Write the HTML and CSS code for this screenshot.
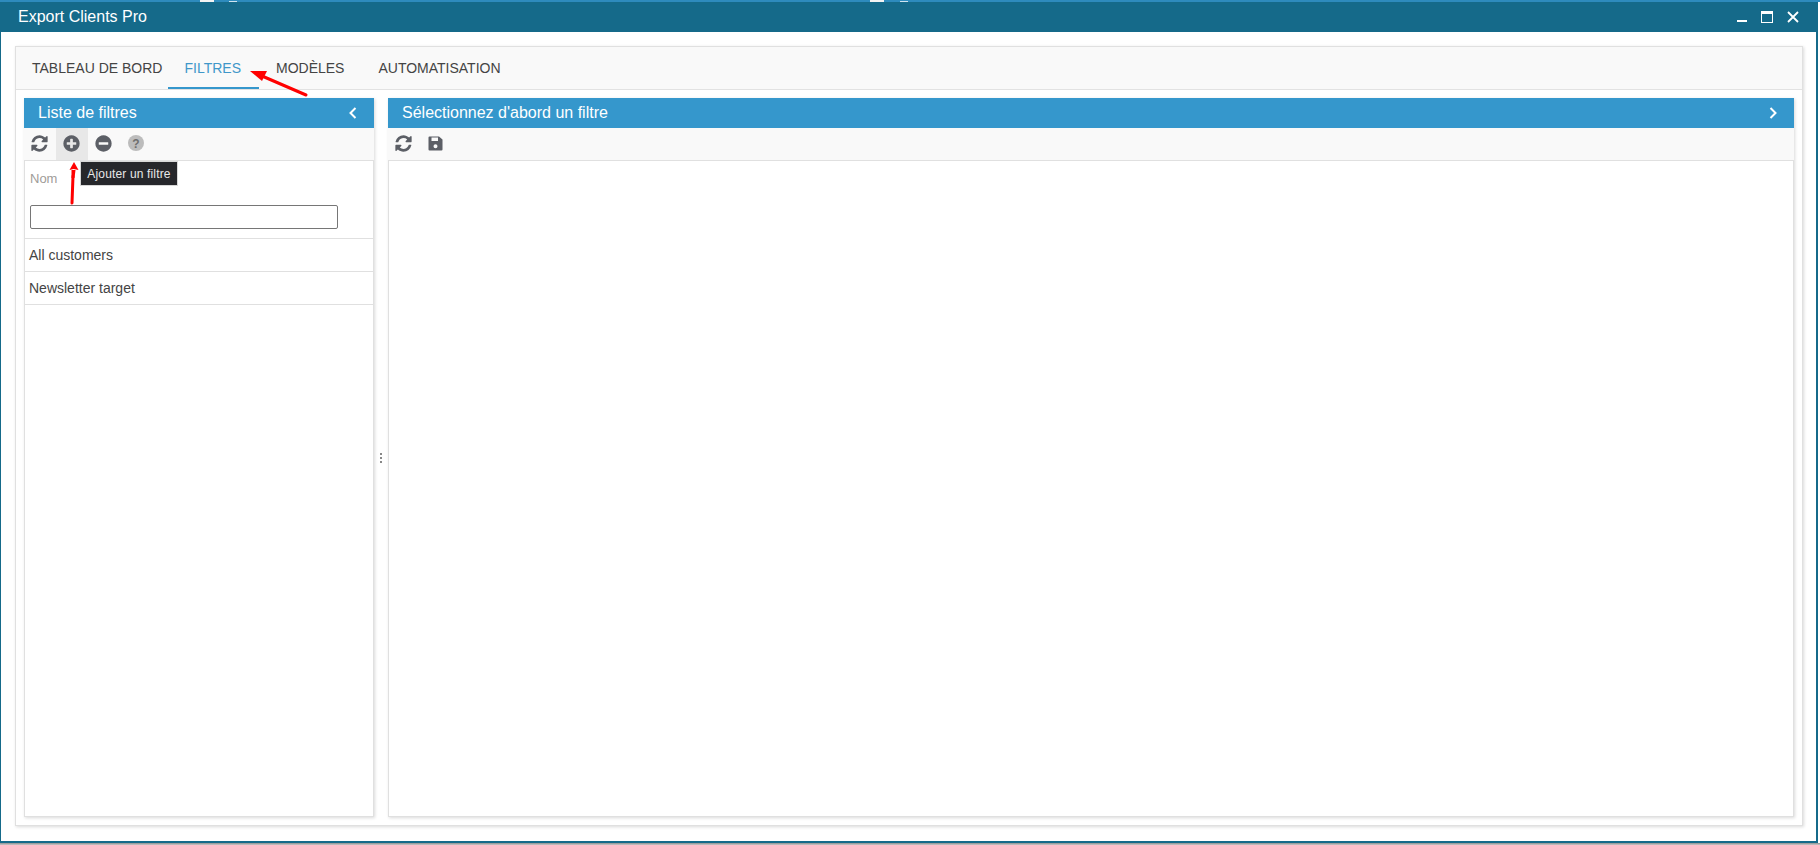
FILE: index.html
```html
<!DOCTYPE html>
<html lang="fr">
<head>
<meta charset="utf-8">
<title>Export Clients Pro</title>
<link rel="stylesheet" href="styles.css">
</head>
<body>
<div class="backdrop"><i class="frag f1"></i><i class="frag f2"></i><i class="frag f3"></i><i class="frag f4"></i></div>
<div class="window">
  <header class="titlebar">
    <span class="title">Export Clients Pro</span>
    <div class="winctrls">
      <svg class="winicon" width="12" height="14" viewBox="0 0 12 14"><rect x="1" y="10" width="10" height="2" fill="#fff"/></svg>
      <svg class="winicon" width="14" height="14" viewBox="0 0 14 14"><rect x="1.500" y="1.500" width="11" height="11" fill="none" stroke="#fff"/><rect x="1" y="1" width="12" height="3" fill="#fff"/></svg>
      <svg class="winicon" width="14" height="14" viewBox="0 0 14 14"><path d="M2 2l10 10M12 2L2 12" stroke="#fff" stroke-width="1.800" fill="none"/></svg>
    </div>
  </header>
  <main class="content">
    <div class="card">
      <nav class="tabs">
        <a class="tab">TABLEAU DE BORD</a>
        <a class="tab active">FILTRES</a>
        <a class="tab">MODÈLES</a>
        <a class="tab">AUTOMATISATION</a>
      </nav>
      <div class="split">
        <section class="panel left">
          <div class="panel-head"><span>Liste de filtres</span>
            <svg width="10" height="14" viewBox="0 0 10 14"><path d="M7.500 2L2.500 7l5 5" fill="none" stroke="#fff" stroke-width="2"/></svg>
          </div>
          <div class="toolbar">
            <button class="tool"><svg class="ico" viewBox="0 0 1792 1792"><path d="M1639 1056q0 5-1 7-64 268-268 434.500t-478 166.500q-146 0-282.500-55t-243.500-157l-129 129q-19 19-45 19t-45-19-19-45v-448q0-26 19-45t45-19h448q26 0 45 19t19 45-19 45l-137 137q71 66 161 102t187 36q134 0 250-65t186-179q11-17 53-117 8-23 30-23h192q13 0 22.500 9.500t9.500 22.500zm25-800v448q0 26-19 45t-45 19h-448q-26 0-45-19t-19-45 19-45l138-138q-148-137-349-137-134 0-250 65t-186 179q-11 17-53 117-8 23-30 23h-199q-13 0-22.500-9.500t-9.500-22.500v-7q65-268 270-434.500t480-166.500q146 0 284 55.500t245 156.500l130-129q19-19 45-19t45 19 19 45z"/></svg></button>
            <button class="tool hover"><svg class="ico" viewBox="0 0 1792 1792"><path d="M1344 960v-128q0-26-19-45t-45-19h-256v-256q0-26-19-45t-45-19h-128q-26 0-45 19t-19 45v256h-256q-26 0-45 19t-19 45v128q0 26 19 45t45 19h256v256q0 26 19 45t45 19h128q26 0 45-19t19-45v-256h256q26 0 45-19t19-45zm320-64q0 209-103 385.500t-279.500 279.500-385.500 103-385.500-103-279.500-279.500-103-385.500 103-385.500 279.500-279.500 385.500-103 385.500 103 279.500 279.500 103 385.500z"/></svg></button>
            <button class="tool"><svg class="ico" viewBox="0 0 1792 1792"><path d="M1344 960v-128q0-26-19-45t-45-19h-768q-26 0-45 19t-19 45v128q0 26 19 45t45 19h768q26 0 45-19t19-45zm320-64q0 209-103 385.500t-279.500 279.500-385.500 103-385.500-103-279.500-279.500-103-385.500 103-385.500 279.500-279.500 385.500-103 385.500 103 279.500 279.500 103 385.500z"/></svg></button>
            <button class="tool"><svg class="help" width="16" height="16" viewBox="0 0 16 16"><circle cx="8" cy="8" r="8" fill="#bcbcbc"/><text x="8" y="12.500" text-anchor="middle" class="help-mark">?</text></svg></button>
          </div>
          <div class="panel-body">
            <div class="filter">
              <label class="filter-label" for="nom">Nom</label>
              <input class="filter-input" id="nom" type="text">
            </div>
            <div class="row">All customers</div>
            <div class="row">Newsletter target</div>
          </div>
        </section>
        <div class="splitter"><i></i><i></i><i></i></div>
        <section class="panel right">
          <div class="panel-head"><span>Sélectionnez d'abord un filtre</span>
            <svg width="10" height="14" viewBox="0 0 10 14"><path d="M2.500 2l5 5-5 5" fill="none" stroke="#fff" stroke-width="2"/></svg>
          </div>
          <div class="toolbar">
            <button class="tool"><svg class="ico" viewBox="0 0 1792 1792"><path d="M1639 1056q0 5-1 7-64 268-268 434.500t-478 166.500q-146 0-282.500-55t-243.500-157l-129 129q-19 19-45 19t-45-19-19-45v-448q0-26 19-45t45-19h448q26 0 45 19t19 45-19 45l-137 137q71 66 161 102t187 36q134 0 250-65t186-179q11-17 53-117 8-23 30-23h192q13 0 22.500 9.500t9.500 22.500zm25-800v448q0 26-19 45t-45 19h-448q-26 0-45-19t-19-45 19-45l138-138q-148-137-349-137-134 0-250 65t-186 179q-11 17-53 117-8 23-30 23h-199q-13 0-22.500-9.500t-9.500-22.500v-7q65-268 270-434.500t480-166.500q146 0 284 55.500t245 156.500l130-129q19-19 45-19t45 19 19 45z"/></svg></button>
            <button class="tool"><svg class="save" width="15" height="15" viewBox="0 0 15 15"><path fill-rule="evenodd" d="M1.500 0.500h9.500l3.500 3v10a1 1 0 0 1-1 1h-12a1 1 0 0 1-1-1v-12a1 1 0 0 1 1-1zm2 1v3.500h6.500V1.500zM7.500 8.200a2 2 0 1 0 0 4a2 2 0 0 0 0-4z"/></svg></button>
          </div>
          <div class="panel-body"></div>
        </section>
      </div>
    </div>
  </main>
</div>
<div class="tooltip">Ajouter un filtre</div>
<svg class="annotations" width="1820" height="845" viewBox="0 0 1820 845">
  <path d="M306 95L262 76" stroke="#f00" stroke-width="3" fill="none" stroke-linecap="round"/>
  <path d="M250 71L267 71L262 81Z" fill="#f00"/>
  <path d="M72 203L73 176" stroke="#f00" stroke-width="3" fill="none" stroke-linecap="round"/>
  <path d="M74 162L78.500 170L73.500 169L69.500 170Z" fill="#f00"/>
  <path d="M71.500 170H75.500L74.500 178H71.500Z" fill="#f00"/>
</svg>
</body>
</html>
```
FILE: styles.css
```css
* { box-sizing: border-box; }
html, body { margin: 0; height: 845px; overflow: hidden; }
body {
  position: relative;
  background: linear-gradient(#8f8f8f, #c9c9c9) 0 843px / 100% 2px no-repeat;
  font-family: "Liberation Sans", Arial, sans-serif;
  color: #3c3c3c;
  padding-top: 2px;
}
.backdrop { position: absolute; left: 0; right: 0; top: 0; height: 2px; background: #2e8bbd; }
.frag { position: absolute; top: 0; height: 2px; background: #f3f3f3; display: block; }
.f1 { left: 200px; width: 14px; }
.f2 { left: 229px; width: 8px; top: 1px; height: 1px; background: #cfe4f0; }
.f3 { left: 870px; width: 14px; }
.f4 { left: 900px; width: 8px; top: 1px; height: 1px; background: #cfe4f0; }
.window {
  width: 1818px;
  height: 841px;
  display: flex;
  flex-direction: column;
  background: #fff;
  border: solid #156a8a;
  border-width: 0 2px 2px 1px;
}
.titlebar {
  flex: 0 0 30px;
  display: flex;
  align-items: center;
  justify-content: space-between;
  background: #156a8a;
  color: #fff;
  padding: 0 16px 0 17px;
}
.title { font-size: 16px; }
.winctrls { display: flex; gap: 12px; align-items: center; }
.winicon { display: block; }
.content { flex: 1; min-height: 0; padding: 14px 13px 15px 14px; }
.card {
  height: 100%;
  display: flex;
  flex-direction: column;
  background: #fff;
  border: 1px solid #e0e0e0;
  box-shadow: 1px 1px 3px rgba(0,0,0,.15);
}
.tabs {
  flex: 0 0 43px;
  display: flex;
  background: #f9f9f9;
  border-bottom: 1px solid #e2e2e2;
}
.tab {
  display: flex;
  align-items: center;
  padding: 0 17px;
  height: 42px;
  font-size: 14px;
  color: #444;
}
.tab:first-child { padding-left: 16px; padding-right: 6px; }
.tab.active { color: #3f97c9; border-bottom: 2px solid #3597cc; padding: 2px 18px 0 16px; }
.split { flex: 1; min-height: 0; display: flex; padding: 8px 8px 8px 8px; }
.panel {
  display: flex;
  flex-direction: column;
  box-shadow: 1px 1px 3px rgba(0,0,0,.15);
}
.panel.left { flex: 0 0 350px; }
.panel.right { flex: 1; min-width: 0; }
.panel-head {
  flex: 0 0 30px;
  display: flex;
  align-items: center;
  justify-content: space-between;
  background: #3597cc;
  color: #fff;
  font-size: 16px;
  padding: 0 16px 0 14px;
}
.toolbar {
  flex: 0 0 32px;
  display: flex;
  background: #f9f9f9;
}
.tool {
  width: 32px;
  height: 32px;
  border: 0;
  padding: 0 1px 2px 0;
  background: transparent;
  display: flex;
  align-items: center;
  justify-content: center;
}
.tool.hover { background: #e8e8e8; }
.ico { width: 19px; height: 19px; fill: #5c5f66; display: block; }
.help { display: block; }
.help-mark { font: bold 12px "Liberation Sans", Arial, sans-serif; fill: #6e6e6e; }
.save { display: block; fill: #5c5f66; }
.panel-body {
  flex: 1;
  min-height: 0;
  background: #fff;
  border: 1px solid #e0e0e0;
}
.filter { height: 78px; padding: 0 5px; border-bottom: 1px solid #e0e0e0; display: flex; flex-direction: column; }
.filter-label { font-size: 13px; color: #a09c98; margin-top: 10px; height: 26px; line-height: 15px; }
.filter-input {
  width: 308px;
  height: 24px;
  margin-top: 8px;
  border: 1px solid #767676;
  border-radius: 2px;
  background: #fff;
}
.row {
  height: 33px;
  padding-left: 4px;
  display: flex;
  align-items: center;
  font-size: 14px;
  color: #444;
  border-bottom: 1px solid #e0e0e0;
}
.splitter {
  flex: 0 0 14px;
  display: flex;
  flex-direction: column;
  align-items: center;
  justify-content: center;
  gap: 2px;
}
.splitter i { width: 2px; height: 2px; background: #888; display: block; }
.tooltip {
  position: absolute;
  left: 80px;
  top: 161px;
  width: 98px;
  height: 25px;
  background: #26272b;
  color: #e8e8e8;
  border: 1px solid #d8d8d8;
  font-size: 12px;
  letter-spacing: .15px;
  display: flex;
  align-items: center;
  justify-content: center;
}
.annotations { position: absolute; left: 0; top: 0; pointer-events: none; }
```
